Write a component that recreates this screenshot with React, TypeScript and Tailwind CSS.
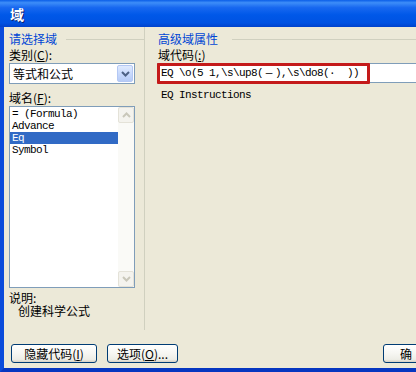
import React from "react";

const cjk = "font-['Noto_Sans_CJK_SC','Noto_Sans',sans-serif]";
const mono = "font-['Liberation_Mono','DejaVu_Sans_Mono',monospace] text-[11px] tracking-[-0.6px]";

function XPButton({ children, className = "" }: { children: React.ReactNode; className?: string }) {
  return (
    <div
      className={`h-[19px] shrink-0 rounded-[3px] border border-[#003C74] bg-[linear-gradient(to_bottom,#FFFFFF_0%,#F6F6F2_50%,#EDEDE6_85%,#D6D0C5_100%)] flex items-center justify-center text-[12px] leading-[14px] text-black ${className}`}
    >
      {children}
    </div>
  );
}

function ScrollBtn({ up }: { up: boolean }) {
  return (
    <div className="h-[16px] w-[16px] rounded-[2px] border border-[#E4E2D8] bg-[#F4F3EE] flex items-center justify-center">
      <svg width="9" height="6" viewBox="0 0 9 6">
        <path
          d={up ? "M1 5 L4.5 1.5 L8 5" : "M1 1 L4.5 4.5 L8 1"}
          fill="none"
          stroke="#C9C7BA"
          strokeWidth="2"
        />
      </svg>
    </div>
  );
}

export default function App() {
  return (
    <div className={`w-[416px] h-[372px] overflow-hidden bg-[#ECE9D8] flex flex-col ${cjk}`}>
      {/* Title bar */}
      <div className="h-[27px] shrink-0 bg-[linear-gradient(to_bottom,#0A5EE8_0%,#3D8DF8_10%,#1868F0_28%,#0058E8_55%,#0052E2_85%,#0042CC_100%)] flex items-center pl-[10px]">
        <span className="text-white font-bold text-[14px] leading-none [text-shadow:1px_1px_0_#0A1E70]">域</span>
      </div>
      {/* Body */}
      <div className="flex-1 flex flex-col border-l-4 border-l-[#0A4BDB] border-b-4 border-b-[#0636C0] min-h-0">
        <div className="flex-1 flex min-h-0">
          {/* Left column */}
          <div className="w-[141px] shrink-0 pl-[5px] pt-[5px] flex flex-col border-r border-r-[#D0D0BF] mb-[14px]">
            <div className="flex items-center h-[14px] shrink-0">
              <span className="text-[12px] leading-[14px] text-[#0046D5]">请选择域</span>
              <div className="flex-1 h-px bg-[#D0D0BF] ml-[9px] mt-[1px]"></div>
            </div>
            <div className="mt-[2px] text-[12px] leading-[14px] text-black shrink-0">
              类别(<span className="underline">C</span>):
            </div>
            <div className="mt-[1px] w-[126px] h-[21px] shrink-0 border border-[#7F9DB9] bg-white flex items-center">
              <span className="pl-[3px] text-[12px] leading-[14px] text-black flex-1">等式和公式</span>
              <div className="w-[16px] h-[17px] mr-[1px] rounded-[2px] border border-[#B4C8F4] bg-[linear-gradient(to_bottom,#E0EBFE_0%,#C9DAFD_50%,#B6CBF6_100%)] flex items-center justify-center">
                <svg width="9" height="6" viewBox="0 0 9 6">
                  <path d="M1 1 L4.5 4.5 L8 1" fill="none" stroke="#4D6185" strokeWidth="2" />
                </svg>
              </div>
            </div>
            <div className="mt-[7px] text-[12px] leading-[14px] text-black shrink-0">
              域名(<span className="underline">F</span>):
            </div>
            <div className="mt-[1px] w-[126px] h-[182px] shrink-0 border border-[#7F9DB9] bg-white flex">
              <div className={`flex-1 pt-[1px] ${mono} text-black`}>
                <div className="h-[12px] leading-[12px] pl-[2px]">= (Formula)</div>
                <div className="h-[12px] leading-[12px] pl-[2px]">Advance</div>
                <div className="h-[12px] leading-[12px] pl-[2px] bg-[#316AC5] text-white">Eq</div>
                <div className="h-[12px] leading-[12px] pl-[2px]">Symbol</div>
              </div>
              <div className="w-[16px] bg-[#FAFAF7] flex flex-col justify-between">
                <ScrollBtn up={true} />
                <ScrollBtn up={false} />
              </div>
            </div>
            <div className="mt-[4px] text-[12px] leading-[12px] text-black shrink-0">说明:</div>
            <div className="pl-[9px] text-[12px] leading-[13px] text-black shrink-0">创建科学公式</div>
          </div>
          {/* Right column */}
          <div className="flex-1 pl-[12px] pt-[5px] flex flex-col min-w-0">
            <div className="flex items-center h-[14px] pl-[1px]">
              <span className="text-[12px] leading-[14px] text-[#0046D5]">高级域属性</span>
              <div className="flex-1 h-px bg-[#D0D0BF] ml-[14px] mt-[1px]"></div>
            </div>
            <div className="mt-[2px] pl-[1px] text-[12px] leading-[14px] text-black">
              域代码(<span className="underline">:</span>)
            </div>
            <div className="relative mt-[1px] h-[20px] border-y border-l border-[#7F9DB9] bg-white flex items-center">
              <span className={`pl-[3px] whitespace-pre text-black ${mono}`}>
                EQ \o(5 1,\s\up8(<span className="inline-block w-[12px] text-center tracking-normal">—</span>),\s\do8(·  ))
              </span>
              <div className="absolute left-[-1px] top-[-1px] w-[213px] h-[21px] border-[3px] border-[#C41A1A] rounded-[1px]"></div>
            </div>
            <div className={`mt-[6px] pl-[4px] whitespace-pre text-black ${mono} leading-[12px]`}>EQ Instructions</div>
          </div>
        </div>
        {/* Buttons */}
        <div className="h-[19px] mb-[5px] flex items-center pl-[7px] shrink-0">
          <XPButton className="w-[86px]">
            隐藏代码(<span className="underline">I</span>)
          </XPButton>
          <XPButton className="w-[71px] ml-[10px]">
            选项(<span className="underline">O</span>)...
          </XPButton>
          <div className="flex-1"></div>
          <XPButton className="w-[36px] mr-[-3px] justify-start pl-[16px]">确</XPButton>
        </div>
      </div>
    </div>
  );
}
